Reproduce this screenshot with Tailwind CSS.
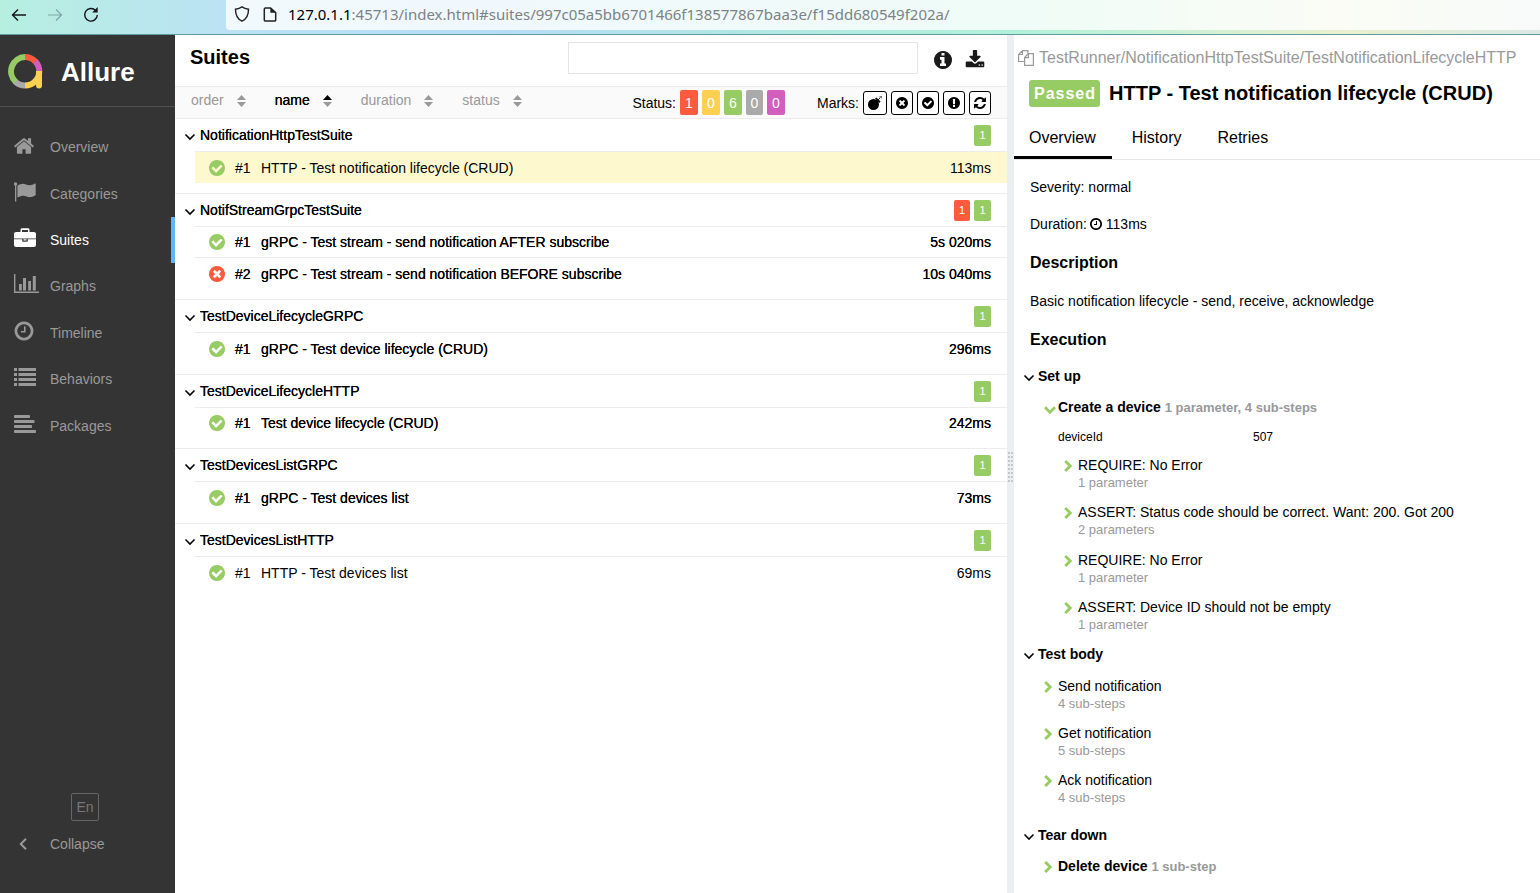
<!DOCTYPE html>
<html lang="en">
<head>
<meta charset="utf-8">
<title>Allure Report</title>
<script src="https://cdn.jsdelivr.net/npm/@tailwindcss/browser@4"></script>
</head>
<body class="flex h-screen flex-col overflow-hidden bg-white font-['Liberation_Sans',sans-serif] text-sm leading-5 text-black">

<svg class="hidden" xmlns="http://www.w3.org/2000/svg">
  <symbol id="home" viewBox="0 0 1792 1792"><path d="M1472 992v480q0 26-19 45t-45 19h-384v-384h-256v384h-384q-26 0-45-19t-19-45v-480q0-1 .5-3t.5-3l575-474 575 474q1 2 1 6zm223-69l-62 74q-8 9-21 11h-3q-13 0-21-7l-692-577-692 577q-12 8-24 7-13-2-21-11l-62-74q-8-10-7-23.5t11-21.5l719-599q32-26 76-26t76 26l244 204v-195q0-14 9-23t23-9h192q14 0 23 9t9 23v408l219 182q10 8 11 21.5t-7 23.5z"/></symbol>
  <symbol id="flag" viewBox="0 0 22 20"><circle cx="1.500" cy="2" r="1.700"/><path d="M1 2h1.300v17.500H1zM3.600 3.600C6 2 9 1.200 12 2.400c3 1.300 6 1 8.800-.8.500-.2.900 0 .9.500v10.600c0 .4-.2.700-.6.900-3 1.700-5.800 2-8.600.8-3-1.300-5.500-.8-8.300.9-.5.300-.8 0-.8-.4V4.500c0-.4 0-.7.200-.9z"/></symbol>
  <symbol id="case" viewBox="0 0 22 20"><path fill-rule="evenodd" d="M6.500 4V1.800C6.500.9 7.100.3 8 .3h6c.9 0 1.500.6 1.500 1.500V4H20c1.100 0 2 .9 2 2v4.500H0V6c0-1.100.9-2 2-2h4.500zM8 4h6V2H8zM0 11.300h8.200v1.600c0 .5.300.8.800.8h4c.5 0 .8-.3.800-.8v-1.600H22V17c0 1.100-.9 2-2 2H2c-1.100 0-2-.9-2-2zM9.500 11.300h3v1.200h-3z"/></symbol>
  <symbol id="bars" viewBox="0 0 25 20"><path d="M0 0h1.400v17.600H25V19H0zM5 10h2.800v6.500H5zM9 4h3v12.500H9zM14.200 7H17v9.500h-2.800zM18.800 2h3v14.500h-3z"/></symbol>
  <symbol id="clock" viewBox="0 0 1792 1792"><path d="M1024 544v448q0 14-9 23t-23 9h-320q-14 0-23-9t-9-23v-64q0-14 9-23t23-9h224v-352q0-14 9-23t23-9h64q14 0 23 9t9 23zm416 352q0-148-73-273t-198-198-273-73-273 73-198 198-73 273 73 273 198 198 273 73 273-73 198-198 73-273zm224 0q0 209-103 385.500t-279.500 279.500-385.500 103-385.500-103-279.500-279.500-103-385.500 103-385.500 279.500-279.500 385.500-103 385.500 103 279.500 279.500 103 385.500z"/></symbol>
  <symbol id="list" viewBox="0 0 22 18"><path d="M0 0h3v3H0zM4.500 0H22v3H4.500zM0 5h3v3H0zM4.500 5H22v3H4.500zM0 10h3v3H0zM4.500 10H22v3H4.500zM0 15h3v3H0zM4.500 15H22v3H4.500z"/></symbol>
  <symbol id="align" viewBox="0 0 22 18"><rect width="16" height="3" rx=".7"/><rect y="5" width="20.500" height="3" rx=".7"/><rect y="10" width="18" height="3" rx=".7"/><rect y="15" width="22" height="3" rx=".7"/></symbol>
  <symbol id="ok" viewBox="128 128 1536 1536"><path d="M1412 734q0-28-18-46l-91-90q-19-19-45-19t-45 19l-408 407-226-226q-19-19-45-19t-45 19l-91 90q-18 18-18 46 0 27 18 45l362 362q19 19 45 19 27 0 46-19l543-543q18-18 18-45zm252 162q0 209-103 385.500t-279.500 279.500-385.500 103-385.500-103-279.500-279.500-103-385.500 103-385.500 279.500-279.500 385.500-103 385.500 103 279.500 279.500 103 385.500z"/></symbol>
  <symbol id="fail" viewBox="128 128 1536 1536"><path d="M1277 1122q0-26-19-45l-181-181 181-181q19-19 19-45 0-27-19-46l-90-90q-19-19-46-19-26 0-45 19l-181 181-181-181q-19-19-45-19-27 0-46 19l-90 90q-19 19-19 46 0 26 19 45l181 181-181 181q-19 19-19 45 0 27 19 46l90 90q19 19 46 19 26 0 45-19l181-181 181 181q19 19 45 19 27 0 46-19l90-90q19-19 19-46zm387-226q0 209-103 385.500t-279.500 279.500-385.500 103-385.500-103-279.500-279.500-103-385.500 103-385.500 279.500-279.500 385.500-103 385.500 103 279.500 279.500 103 385.500z"/></symbol>
  <symbol id="warn" viewBox="128 128 1536 1536"><path d="M896 128q209 0 385.500 103t279.500 279.500 103 385.500-103 385.500-279.500 279.500-385.500 103-385.500-103-279.500-279.500-103-385.500 103-385.500 279.500-279.500 385.500-103zm128 1247v-190q0-14-9-23.500t-22-9.500h-192q-13 0-23 10t-10 23v190q0 13 10 23t23 10h192q13 0 22-9.500t9-23.500zm-2-344l18-621q0-12-10-18-10-8-24-8h-220q-14 0-24 8-10 6-10 18l17 621q0 10 10 17.500t24 7.500h185q14 0 23.500-7.500t10.500-17.500z"/></symbol>
  <symbol id="info" viewBox="128 128 1536 1536"><path d="M1152 1376v-160q0-14-9-23t-23-9h-96v-512q0-14-9-23t-23-9h-320q-14 0-23 9t-9 23v160q0 14 9 23t23 9h96v320h-96q-14 0-23 9t-9 23v160q0 14 9 23t23 9h448q14 0 23-9t9-23zm-128-896v-160q0-14-9-23t-23-9h-192q-14 0-23 9t-9 23v160q0 14 9 23t23 9h192q14 0 23-9t9-23zm640 416q0 209-103 385.500t-279.500 279.500-385.500 103-385.500-103-279.500-279.500-103-385.500 103-385.500 279.500-279.500 385.500-103 385.500 103 279.500 279.500 103 385.500z"/></symbol>
  <symbol id="download" viewBox="0 0 1792 1600"><path d="M1344 1344q0-26-19-45t-45-19-45 19-19 45 19 45 45 19 45-19 19-45zm256 0q0-26-19-45t-45-19-45 19-19 45 19 45 45 19 45-19 19-45zm128-224v320q0 40-28 68t-68 28h-1472q-40 0-68-28t-28-68v-320q0-40 28-68t68-28h465l135 136q58 56 136 56t136-56l136-136h464q40 0 68 28t28 68zm-325-569q17 41-14 70l-448 448q-18 19-45 19t-45-19l-448-448q-31-29-14-70 17-39 59-39h256v-448q0-26 19-45t45-19h256q26 0 45 19t19 45v448h256q42 0 59 39z"/></symbol>
  <symbol id="refresh" viewBox="128 128 1536 1536"><path d="M1639 1056q0 5-1 7-64 268-268 434.500t-478 166.500q-146 0-282.500-55t-243.500-157l-129 129q-19 19-45 19t-45-19-19-45v-448q0-26 19-45t45-19h448q26 0 45 19t19 45-19 45l-137 137q71 66 161 102t187 36q134 0 250-65t186-179q11-17 53-117 8-23 30-23h192q13 0 22.500 9.500t9.500 22.500zm25-800v448q0 26-19 45t-45 19h-448q-26 0-45-19t-19-45 19-45l138-138q-148-137-349-137-134 0-250 65t-186 179q-11 17-53 117-8 23-30 23h-199q-13 0-22.500-9.500t-9.500-22.500v-7q65-268 270-434.500t480-166.500q146 0 284 55.500t245 156.500l130-129q19-19 45-19t45 19 19 45z"/></symbol>
  <symbol id="bomb" viewBox="0 0 14 14"><circle cx="5.500" cy="8.500" r="5.500"/><path d="M7 2.500l1.400-1 4.100 4.100-1 1.400z"/><path d="M10 4l2.500-2.500" stroke="currentColor" stroke-width=".9" fill="none"/><path d="M10.800.5l.8.700M11.800.3h2v2.200" stroke="currentColor" stroke-width=".6" fill="none"/></symbol>
  <symbol id="down" viewBox="0 0 12 8"><path d="M1.500 1.500L6 6l4.500-4.500" fill="none" stroke="currentColor" stroke-width="1.600"/></symbol>
  <symbol id="gdown" viewBox="0 0 12 8"><path d="M1 1.200L6 6.200l5-5" fill="none" stroke="currentColor" stroke-width="2.800"/></symbol>
  <symbol id="gright" viewBox="0 0 8 12"><path d="M1.200 1l5 5-5 5" fill="none" stroke="currentColor" stroke-width="2.800"/></symbol>
  <symbol id="sort" viewBox="0 0 9 12"><path d="M0 5l4.500-5L9 5z"/><path d="M0 7l4.500 5L9 7z" fill="#999"/></symbol>
</svg>

<header class="flex h-[35px] shrink-0 border-b border-[#5f9ba0] bg-linear-[to_right,#b6efe0_0%,#bbe3f3_14%,#b7dcf4_32%,#b2e8e4_50%,#b1f0d9_66%,#eaf0cf_87%,#d9e8e2_100%]">
  <div class="flex w-[226px] shrink-0 items-start gap-5 pt-[7px] pl-[11px]">
    <button aria-label="Back"><svg class="size-4" viewBox="0 0 16 16" fill="none" stroke="#15141a" stroke-width="1.400"><path d="M15 8H1.500M7 2.500L1.500 8 7 13.500"/></svg></button>
    <button aria-label="Forward" class="text-[#7fa5a8]"><svg class="size-4" viewBox="0 0 16 16" fill="none" stroke="currentColor" stroke-width="1.200"><path d="M1 8h13.500M9 2.500l5.500 5.500L9 13.500"/></svg></button>
    <button aria-label="Reload"><svg class="size-4" viewBox="0 0 16 16" fill="none" stroke="#15141a" stroke-width="1.400"><path d="M12.600 3.500A6.300 6.300 0 1 0 14.300 8"/><path d="M14.700 0v5.500H9.200z" fill="#15141a" stroke="none"/></svg></button>
  </div>
  <div class="flex h-[30px] flex-1 items-start rounded-bl bg-white/80 pl-2">
    <svg class="mt-[6px] h-4 w-4" viewBox="0 0 16 16" fill="none" stroke="#222" stroke-width="1.400"><path d="M8 .9c2 1.400 4 2 6.500 2.300C14.600 9 12.500 13 8 15.200 3.500 13 1.400 9 1.500 3.200 4 2.900 6 2.300 8 .9z"/></svg>
    <svg class="mt-[7px] ml-3 h-[15px] w-4" viewBox="0 0 16 15" fill="none" stroke="#222" stroke-width="1.500"><path d="M8.500.9H3.500C2.800.9 2.300 1.400 2.300 2v11c0 .6.500 1.100 1.200 1.100h9c.6 0 1.200-.5 1.200-1.100V5.500z"/><path d="M8.300.5v5.300h5.500z" fill="#222" stroke="none"/></svg>
    <p class="pt-1 pl-[10px] font-['Noto_Sans',sans-serif] text-[15px] text-[#7c8286]"><span class="text-black">127.0.1.1</span>:45713/index.html#suites/997c05a5bb6701466f138577867baa3e/f15dd680549f202a/</p>
  </div>
</header>

<div class="flex min-h-0 flex-1">
  <aside class="flex w-[175px] shrink-0 flex-col bg-[#343434] text-[#999]">
    <a href="#" class="flex h-[72px] items-center gap-[17px] border-b border-[#4f4f4f] pt-[2px] pl-2 text-[26px] font-bold text-white">
      <svg class="size-9" viewBox="0 0 36 36" fill="none" stroke-width="6"><path d="M17 31.500A14.300 14.300 0 0 1 7 27.300" stroke="#aaa"/><path d="M7.500 27.600A14.300 14.300 0 0 1 17 3" stroke="#97cc64"/><path d="M17 3a14.300 14.300 0 0 1 10.500 4.600" stroke="#fd5a3e"/><path d="M27.300 7.300A14.300 14.300 0 0 1 31.300 17.300" stroke="#d35ebe"/><path d="M31.300 17.200A14.300 14.300 0 0 1 17 31.500M31 17v14.500" stroke="#ffd050"/><circle cx="31" cy="31.500" r="3" fill="#ffd050" stroke="none"/></svg>
      Allure
    </a>
    <nav class="mt-[17px] grid h-[325px] grid-rows-7 fill-current">
      <a href="#" class="flex items-center pl-[13px]"><svg class="h-[22px] w-[22px] -mt-[2px]"><use href="#home"/></svg><span class="ml-[15px]">Overview</span></a>
      <a href="#categories" class="flex items-center pl-[14px]"><svg class="-mt-1 h-5 w-[22px]"><use href="#flag"/></svg><span class="ml-[14px]">Categories</span></a>
      <a href="#suites" class="flex items-center border-r-4 border-[#64b5f6] pl-[14px] text-white"><svg class="-mt-1 h-5 w-[22px]"><use href="#case"/></svg><span class="ml-[14px]">Suites</span></a>
      <a href="#graph" class="flex items-center pl-[14px]"><svg class="-mt-1 h-5 w-[25px]"><use href="#bars"/></svg><span class="ml-[11px]">Graphs</span></a>
      <a href="#timeline" class="flex items-center pl-[13px]"><svg class="-mt-1 size-[22px]"><use href="#clock"/></svg><span class="ml-[15px]">Timeline</span></a>
      <a href="#behaviors" class="flex items-center pl-[14px]"><svg class="-mt-1 h-[18px] w-[22px]"><use href="#list"/></svg><span class="ml-[14px]">Behaviors</span></a>
      <a href="#packages" class="flex items-center pl-[14px]"><svg class="-mt-1 h-[18px] w-[22px]"><use href="#align"/></svg><span class="ml-[14px]">Packages</span></a>
    </nav>
    <div class="mt-auto mb-[39px] flex flex-col gap-[13px]">
      <button class="ml-[71px] size-7 rounded-xs border border-[#666] text-[#777]">En</button>
      <button class="flex items-center pl-[19px]"><svg class="h-3 w-2" viewBox="0 0 8 12" fill="none" stroke="currentColor" stroke-width="2"><path d="M7 .8L1.800 6 7 11.200"/></svg><span class="ml-[23px]">Collapse</span></button>
    </div>
  </aside>

  <main class="flex min-w-0 flex-1 flex-col">
    <div class="flex h-[51px] items-start pr-[22px] pl-[15px]">
      <h1 class="flex-1 pt-2 text-xl leading-7 font-bold">Suites</h1>
      <input type="search" aria-label="Search tests" class="mt-[7px] h-8 w-[350px] border border-[#e5e5e5] px-2">
      <button aria-label="Information" class="mt-4 ml-4 text-[#1a1a1a]"><svg class="size-[18px] fill-current"><use href="#info"/></svg></button>
      <button aria-label="Download CSV" class="mt-[15px] ml-[13px] text-[#1a1a1a]"><svg class="h-[18px] w-5 fill-current"><use href="#download"/></svg></button>
    </div>
    <div class="flex h-[33px] items-center border-y border-[#ececec] bg-[#fafafa] pr-4 pl-4">
      <div class="flex flex-1 items-center gap-[29px] fill-current pb-[5px] text-[#999]">
        <button class="flex items-center gap-[13px]">order<svg class="mt-[2px] h-3 w-[9px]"><use href="#sort"/></svg></button>
        <button class="flex items-center gap-[13px] text-black [text-shadow:0_0_0_#000]">name<svg class="mt-[2px] h-3 w-[9px]"><use href="#sort"/></svg></button>
        <button class="flex items-center gap-[13px]">duration<svg class="mt-[2px] h-3 w-[9px]"><use href="#sort"/></svg></button>
        <button class="flex items-center gap-[13px]">status<svg class="mt-[2px] h-3 w-[9px]"><use href="#sort"/></svg></button>
      </div>
      <div class="flex items-center gap-1 text-white">
        <span class="text-black">Status:</span>
        <button class="h-[25px] w-[18px] rounded-xs bg-[#fd5a3e]">1</button>
        <button class="h-[25px] w-[18px] rounded-xs bg-[#ffd050]">0</button>
        <button class="h-[25px] w-[18px] rounded-xs bg-[#97cc64]">6</button>
        <button class="h-[25px] w-[17px] rounded-xs bg-[#aaa]">0</button>
        <button class="h-[25px] w-[18px] rounded-xs bg-[#d35ebe]">0</button>
      </div>
      <div class="ml-8 flex items-center gap-1 fill-current">
        <span>Marks:</span>
        <button aria-label="Flaky" class="grid h-6 w-6 place-items-center rounded-[3px] border border-black bg-white"><svg class="size-[14px]"><use href="#bomb"/></svg></button>
        <button aria-label="New failed" class="grid h-6 w-[22px] place-items-center rounded-[3px] border border-black bg-white"><svg class="size-3"><use href="#fail"/></svg></button>
        <button aria-label="New passed" class="grid h-6 w-[22px] place-items-center rounded-[3px] border border-black bg-white"><svg class="size-3"><use href="#ok"/></svg></button>
        <button aria-label="New broken" class="grid h-6 w-[22px] place-items-center rounded-[3px] border border-black bg-white"><svg class="size-3"><use href="#warn"/></svg></button>
        <button aria-label="Retries" class="grid h-6 w-[22px] place-items-center rounded-[3px] border border-black bg-white"><svg class="size-3"><use href="#refresh"/></svg></button>
      </div>
    </div>

    <div class="fill-current [text-shadow:0_0_0_#000]">
      <section class="border-b border-[#ececec] pb-[10px]">
        <div class="flex h-8 items-center pr-4 pl-[9px]"><button class="flex flex-1 items-center gap-1 [text-shadow:0_0_0_#000]"><svg class="mt-1 h-2 w-3"><use href="#down"/></svg>NotificationHttpTestSuite</button><span class="w-[17px] rounded-xs bg-[#97cc64] text-center text-[11px] leading-[21px] text-white [text-shadow:none]">1</span></div>
        <a href="#t1" class="ml-5 flex h-8 items-center border-t border-[#ececec] bg-[#fdf8ce] pr-4 pl-[14px] [text-shadow:none]"><svg class="size-4 text-[#97cc64]"><use href="#ok"/></svg><span class="ml-[10px] w-[26px]">#1</span><span class="flex-1">HTTP - Test notification lifecycle (CRUD)</span><span>113ms</span></a>
      </section>
      <section class="border-b border-[#ececec] pb-[10px]">
        <div class="flex h-8 items-center pr-4 pl-[9px]"><button class="flex flex-1 items-center gap-1 [text-shadow:0_0_0_#000]"><svg class="mt-1 h-2 w-3"><use href="#down"/></svg>NotifStreamGrpcTestSuite</button><span class="mr-1 w-4 rounded-xs bg-[#fd5a3e] text-center text-[11px] leading-[21px] text-white [text-shadow:none]">1</span><span class="w-[17px] rounded-xs bg-[#97cc64] text-center text-[11px] leading-[21px] text-white [text-shadow:none]">1</span></div>
        <a href="#t2" class="ml-5 flex h-[31px] items-center border-t border-[#ececec] pr-4 pl-[14px]"><svg class="size-4 text-[#97cc64]"><use href="#ok"/></svg><span class="ml-[10px] w-[26px]">#1</span><span class="flex-1">gRPC - Test stream - send notification AFTER subscribe</span><span>5s 020ms</span></a>
        <a href="#t3" class="ml-5 flex h-8 items-center border-t border-[#ececec] pr-4 pl-[14px]"><svg class="size-4 text-[#fd5a3e]"><use href="#fail"/></svg><span class="ml-[10px] w-[26px]">#2</span><span class="flex-1">gRPC - Test stream - send notification BEFORE subscribe</span><span>10s 040ms</span></a>
      </section>
      <section class="border-b border-[#ececec] pb-[10px]">
        <div class="flex h-8 items-center pr-4 pl-[9px]"><button class="flex flex-1 items-center gap-1 [text-shadow:0_0_0_#000]"><svg class="mt-1 h-2 w-3"><use href="#down"/></svg>TestDeviceLifecycleGRPC</button><span class="w-[17px] rounded-xs bg-[#97cc64] text-center text-[11px] leading-[21px] text-white [text-shadow:none]">1</span></div>
        <a href="#t4" class="ml-5 flex h-8 items-center border-t border-[#ececec] pr-4 pl-[14px]"><svg class="size-4 text-[#97cc64]"><use href="#ok"/></svg><span class="ml-[10px] w-[26px]">#1</span><span class="flex-1">gRPC - Test device lifecycle (CRUD)</span><span>296ms</span></a>
      </section>
      <section class="border-b border-[#ececec] pb-[10px]">
        <div class="flex h-8 items-center pr-4 pl-[9px]"><button class="flex flex-1 items-center gap-1 [text-shadow:0_0_0_#000]"><svg class="mt-1 h-2 w-3"><use href="#down"/></svg>TestDeviceLifecycleHTTP</button><span class="w-[17px] rounded-xs bg-[#97cc64] text-center text-[11px] leading-[21px] text-white [text-shadow:none]">1</span></div>
        <a href="#t5" class="ml-5 flex h-[31px] items-center border-t border-[#ececec] pr-4 pl-[14px]"><svg class="size-4 text-[#97cc64]"><use href="#ok"/></svg><span class="ml-[10px] w-[26px]">#1</span><span class="flex-1">Test device lifecycle (CRUD)</span><span>242ms</span></a>
      </section>
      <section class="border-b border-[#ececec] pb-[10px]">
        <div class="flex h-8 items-center pr-4 pl-[9px]"><button class="flex flex-1 items-center gap-1 [text-shadow:0_0_0_#000]"><svg class="mt-1 h-2 w-3"><use href="#down"/></svg>TestDevicesListGRPC</button><span class="w-[17px] rounded-xs bg-[#97cc64] text-center text-[11px] leading-[21px] text-white [text-shadow:none]">1</span></div>
        <a href="#t6" class="ml-5 flex h-8 items-center border-t border-[#ececec] pr-4 pl-[14px]"><svg class="size-4 text-[#97cc64]"><use href="#ok"/></svg><span class="ml-[10px] w-[26px]">#1</span><span class="flex-1">gRPC - Test devices list</span><span>73ms</span></a>
      </section>
      <section>
        <div class="flex h-8 items-center pr-4 pl-[9px]"><button class="flex flex-1 items-center gap-1 [text-shadow:0_0_0_#000]"><svg class="mt-1 h-2 w-3"><use href="#down"/></svg>TestDevicesListHTTP</button><span class="w-[17px] rounded-xs bg-[#97cc64] text-center text-[11px] leading-[21px] text-white [text-shadow:none]">1</span></div>
        <a href="#t7" class="ml-5 flex h-8 items-center border-t border-[#ececec] pr-4 pl-[14px] [text-shadow:none]"><svg class="size-4 text-[#97cc64]"><use href="#ok"/></svg><span class="ml-[10px] w-[26px]">#1</span><span class="flex-1">HTTP - Test devices list</span><span>69ms</span></a>
      </section>
    </div>
  </main>

  <div class="flex w-[7px] shrink-0 items-center justify-center bg-[#ebeff2] pt-[6px]">
    <svg class="h-[31px] w-[5px] text-[#c3c7ca]" viewBox="0 0 5 31"><path d="M1 0v31M4 0v31" stroke="currentColor" stroke-width="2" stroke-dasharray="2 2"/></svg>
  </div>

  <article class="w-[526px] shrink-0 overflow-hidden">
    <div class="flex items-center gap-[5px] pt-3 pl-1 text-base leading-[22px] whitespace-nowrap text-[#999]">
      <svg class="h-4 w-4 shrink-0" viewBox="0 0 16 16" fill="none" stroke="currentColor" stroke-width="1.200"><path d="M6.500 11.500H.6V4.500L4.500.6h5.400v3M4.500.6v3.900H.6"/><path d="M10.200 3.600h5.200v11.800H6.600V7.500zM10.400 3.600v4H6.600"/></svg>
      TestRunner/NotificationHttpTestSuite/TestNotificationLifecycleHTTP
    </div>
    <h2 class="mt-[11px] flex items-center gap-[9px] pl-[15px] text-xl leading-[27px] font-bold whitespace-nowrap"><span class="rounded-[3px] bg-[#97cc64] pr-1 pl-[5px] text-base leading-[27px] tracking-[1px] text-white">Passed</span>HTTP - Test notification lifecycle (CRUD)</h2>
    <nav class="mt-[9px] flex h-[44px] gap-1 border-b border-[#e5e5e5] text-base">
      <a href="#overview" class="h-[43px] border-b-3 border-black pt-[10px] pr-4 pl-[15px]">Overview</a>
      <a href="#history" class="px-4 pt-[10px]">History</a>
      <a href="#retries" class="px-4 pt-[10px]">Retries</a>
    </nav>
    <div class="pt-[17px] pl-4">
      <p>Severity: normal</p>
      <p class="mt-[17px] flex items-center gap-1">Duration: <svg class="-ml-px size-3 fill-current" viewBox="128 128 1536 1536"><path d="M1024 544v448q0 14-9 23t-23 9h-320q-14 0-23-9t-9-23v-64q0-14 9-23t23-9h224v-352q0-14 9-23t23-9h64q14 0 23 9t9 23zm416 352q0-148-73-273t-198-198-273-73-273 73-198 198-73 273 73 273 198 198 273 73 273-73 198-198 73-273zm224 0q0 209-103 385.500t-279.500 279.500-385.500 103-385.500-103-279.500-279.500-103-385.500 103-385.500 279.500-279.500 385.500-103 385.500 103 279.500 279.500 103 385.500z"/></svg> 113ms</p>
      <h3 class="mt-[19px] text-base leading-5 font-bold">Description</h3>
      <p class="mt-[18px]">Basic notification lifecycle - send, receive, acknowledge</p>
      <h3 class="mt-[19px] text-base leading-5 font-bold">Execution</h3>
    </div>
    <div class="pt-4 pl-[9px]">
      <button class="flex items-center gap-[3px] font-bold"><svg class="mt-1 h-2 w-3"><use href="#down"/></svg>Set up</button>
      <div class="pl-[21px]">
        <button class="mt-[11px] flex items-center gap-[2px] font-bold"><svg class="mt-1 h-2 w-3 text-[#97cc64]"><use href="#gdown"/></svg><span>Create a device <span class="text-[13px] text-[#999]">1 parameter, 4 sub-steps</span></span></button>
        <table class="mt-[9px] ml-[14px] text-xs leading-5"><tbody><tr><td class="w-[195px]">deviceId</td><td>507</td></tr></tbody></table>
        <div class="mt-2 flex flex-col gap-3 pl-5 text-left">
          <button class="flex gap-[6px] text-left"><svg class="mt-[5px] h-3 w-2 text-[#97cc64]"><use href="#gright"/></svg><span>REQUIRE: No Error<span class="block text-[13px] leading-[15px] text-[#999]">1 parameter</span></span></button>
          <button class="flex gap-[6px] text-left"><svg class="mt-[5px] h-3 w-2 text-[#97cc64]"><use href="#gright"/></svg><span>ASSERT: Status code should be correct. Want: 200. Got 200<span class="block pb-px text-[13px] leading-[15px] text-[#999]">2 parameters</span></span></button>
          <button class="flex gap-[6px] text-left"><svg class="mt-[5px] h-3 w-2 text-[#97cc64]"><use href="#gright"/></svg><span>REQUIRE: No Error<span class="block text-[13px] leading-[15px] text-[#999]">1 parameter</span></span></button>
          <button class="flex gap-[6px] text-left"><svg class="mt-[5px] h-3 w-2 text-[#97cc64]"><use href="#gright"/></svg><span>ASSERT: Device ID should not be empty<span class="block text-[13px] leading-[15px] text-[#999]">1 parameter</span></span></button>
        </div>
      </div>
      <button class="mt-3 flex items-center gap-[3px] font-bold"><svg class="mt-1 h-2 w-3"><use href="#down"/></svg>Test body</button>
      <div class="mt-3 flex flex-col gap-3 pl-[21px]">
        <button class="flex gap-[6px] text-left"><svg class="mt-[5px] h-3 w-2 text-[#97cc64]"><use href="#gright"/></svg><span>Send notification<span class="block text-[13px] leading-[15px] text-[#999]">4 sub-steps</span></span></button>
        <button class="flex gap-[6px] text-left"><svg class="mt-[5px] h-3 w-2 text-[#97cc64]"><use href="#gright"/></svg><span>Get notification<span class="block text-[13px] leading-[15px] text-[#999]">5 sub-steps</span></span></button>
        <button class="flex gap-[6px] text-left"><svg class="mt-[5px] h-3 w-2 text-[#97cc64]"><use href="#gright"/></svg><span>Ack notification<span class="block text-[13px] leading-[15px] text-[#999]">4 sub-steps</span></span></button>
      </div>
      <button class="mt-5 flex items-center gap-[3px] font-bold"><svg class="mt-1 h-2 w-3"><use href="#down"/></svg>Tear down</button>
      <button class="mt-[11px] ml-[21px] flex gap-[6px] font-bold"><svg class="mt-[5px] h-3 w-2 text-[#97cc64]"><use href="#gright"/></svg><span>Delete device <span class="text-[13px] text-[#999]">1 sub-step</span></span></button>
    </div>
  </article>
</div>
</body>
</html>
